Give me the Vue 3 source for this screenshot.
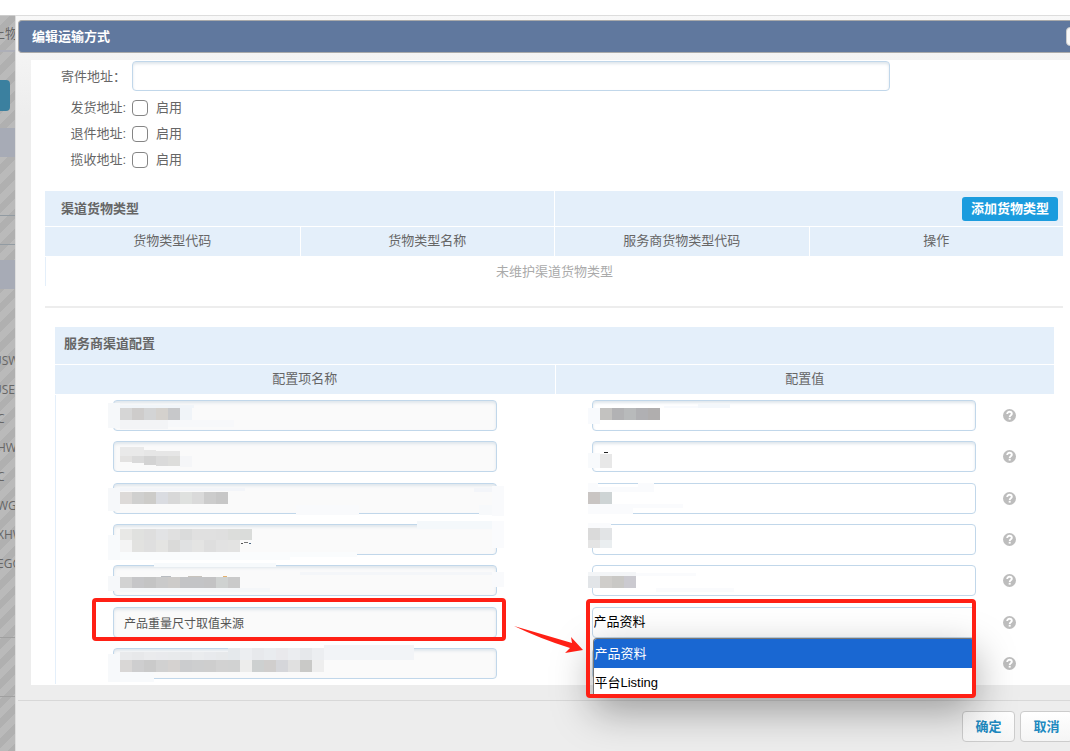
<script setup>
import { ref } from 'vue'

const switches = ['发货地址', '退件地址', '揽收地址']
const cargoColumns = ['货物类型代码', '货物类型名称', '服务商货物类型代码', '操作']
const backdropCodes = [
  { text: 'USW', far: true },
  { text: 'USE', far: true },
  { text: 'C' },
  { text: 'HW' },
  { text: 'C' },
  { text: 'WG' },
  { text: 'XHW' },
  { text: 'EGG' }
]
const source = ref('产品资料')
const sender = ref('')

// Masks are [x, y, width, height, colour] in the field's own coordinates.
const strip = (x, y, h, colours, w = 12) =>
  colours.split(' ').map((c, i) => [x + i * w, y, w, h, '#' + c])

const rows = [
  {
    name: [
      [-5, 3, 12, 25, '#f6f8fa'], [7, 5, 74, 3, '#f1f5f9'], [67, 8, 12, 12, '#f0f4f8'],
      [7, 20, 48, 9, '#f3f4f6'], [55, 20, 66, 7, '#f7f8fa'],
      ...strip(7, 8, 12, 'd6d6d6 cecccb d3d4d5 d4d1cd c7c8ca')
    ],
    value: [
      [-4, 8, 12, 16, '#f8fafd'], [72, 6, 34, 2, '#f8fafd'], [106, 4, 32, 4, '#f3f7fb'],
      ...strip(8, 8, 12, 'c3c2c0 b2b2b4 b8babb b0b0b3 b0aeae')
    ]
  },
  {
    name: [
      [7, 6, 24, 9, '#e9e9e9'], [31, 9, 12, 6, '#e6e6e6'], [43, 10, 24, 5, '#e6e6e6'],
      [67, 15, 12, 11, '#f5f6f8'], [7, 15, 12, 6, '#e3e2e1'], [19, 15, 12, 7, '#dadada'],
      [31, 15, 12, 9, '#d3d3d3'], [43, 15, 12, 10, '#dadada'], [55, 15, 12, 10, '#dddddb']
    ],
    value: [[-4, 12, 12, 15, '#f8fafc'], [8, 13, 12, 14, '#e8e8e8'], [12, 11, 4, 1, '#222222']]
  },
  {
    flat: true,
    name: [
      [-5, 5, 12, 23, '#f6f8fa'], [7, 5, 125, 3, '#f3f5f9'], [183, 22, 63, 10, '#f9fafc'],
      [361, 5, 18, 4, '#f3f5f9'], [366, 22, 13, 10, '#f7f9fb'], [379, 3, 12, 30, '#f9fafc'],
      ...strip(7, 9, 12, 'dddad8 d0d0cf cdccc9 dadce1 d8d8d8 dfe1df dadada cccccc c7c7c7')
    ],
    value: [
      [-4, 0, 10, 9, '#fafbfd'], [46, 0, 16, 9, '#fafbfd'], [6, 4, 56, 5, '#fafbfd'],
      [-4, 21, 45, 10, '#fafbfd'], [41, 21, 50, 4, '#fafbfd'],
      ...strip(-4, 9, 12, 'c9c5c3 ced4d5')
    ]
  },
  {
    flat: true,
    name: [
      [-5, 11, 12, 25, '#f8fafc'], [7, 28, 170, 8, '#fafcfd'], [177, 28, 67, 5, '#fafcfd'],
      [304, -3, 75, 8, '#f4f8fb'], [379, -3, 12, 27, '#fafbfd'],
      ...strip(7, 5, 11, 'e8e8e6 e0e1df dedede e2e3e5 e0e0e0 dadbdb e0e0e0 e0e0e0 dfdfdf dcdddb dadcda'),
      ...strip(7, 16, 12, 'f4f4f4 e2e2e0 dfdfdf e4e4e2 dadad9 e0e1e2 e4e4e3 dedede e2e2e2 e3e3e2'),
      [128, 19, 2, 1, '#555555'], [131, 18, 4, 1, '#777777'], [136, 19, 2, 1, '#4e6a88']
    ],
    value: [
      [-4, -1, 23, 5, '#fafbfd'],
      ...strip(-4, 4, 12, 'dadada e2e4e6'),
      ...strip(-4, 16, 8, 'e4e4e4 eaeef0')
    ]
  },
  {
    flat: true,
    name: [
      [41, -2, 122, 4, '#f7fafc'], [-5, 11, 12, 15, '#f6f8fa'], [187, 7, 192, 3, '#f4f6f9'],
      [379, 7, 12, 15, '#f9fafc'], [48, 11, 10, 1, '#b9bcc0'], [75, 11, 14, 1, '#c8c4be'],
      [110, 11, 4, 1, '#e6b26e'], [7, 23, 150, 4, '#f5f7f9'],
      ...strip(7, 12, 11, 'd2d2d2 c6c6c8 c4c4c4 cacaca cdcbc9 c3c4c6 c3c4c6 c3c3c4 cfd2d1 cacaca')
    ],
    value: [
      [-4, 7, 48, 4, '#f3f5f7'], [44, 8, 60, 3, '#fafbfd'], [64, 23, 78, 4, '#fafbfd'],
      ...strip(-4, 11, 12, 'e2e5e8 cfcdca c9c8c5 cbcad0')
    ]
  },
  { source: true },
  {
    name: [
      [-5, 6, 12, 28, '#f7f9fb'], [7, 24, 34, 10, '#f8fafc'],
      [211, -3, 90, 15, '#f2f4f7'],
      ...strip(7, 4, 8, 'e9eaec e7e8ea eaebed e9eaed e8eaec e7e9eb eaecee e8eaed e7e9eb'),
      ...strip(115, 0, 12, 'e5e9ec eceef1 e7e9ec e9ecef e9e9ec ebedf0 e6e8eb eceef1'),
      ...strip(7, 12, 12, 'd9d7d6 cececf cacaca d1d1d1 d5d2d0 cbccce cdcecf cecece d2d2d2 d1d2d2 ededec cdd0d0 d0cecd d5d6da e0e0e0 c9c9c7 eeeeee')
    ],
    value: []
  }
]
</script>

<template>
  <div class="stage">
    <aside class="backdrop" aria-hidden="true">
      <div class="crumb">上物</div>
      <div class="tab"></div>
      <div class="band"></div>
      <div class="cells"></div>
      <div class="band"></div>
      <ul class="codes">
        <li v-for="(code, i) in backdropCodes" :key="i" :class="{ far: code.far }">{{ code.text }}</li>
      </ul>
      <div class="tail"></div>
    </aside>

    <section class="dialog" role="dialog" aria-labelledby="dialog-title">
      <header class="titlebar">
        <h1 id="dialog-title">编辑运输方式</h1>
        <button class="close" type="button" aria-label="关闭"></button>
      </header>

      <main class="content">
        <div class="form">
          <div class="line sender">
            <label class="caption" for="sender">寄件地址：</label>
            <input id="sender" v-model="sender" class="box" type="text" />
          </div>
          <div v-for="(name, i) in switches" :key="name" class="line">
            <span class="caption">{{ name }}:</span>
            <input :id="'switch' + i" class="tick" type="checkbox" />
            <label :for="'switch' + i">启用</label>
          </div>
        </div>

        <table class="cargo">
          <thead>
            <tr class="heading">
              <th colspan="2">渠道货物类型</th>
              <th colspan="2" class="action"><button class="add" type="button">添加货物类型</button></th>
            </tr>
            <tr class="columns">
              <th v-for="c in cargoColumns" :key="c">{{ c }}</th>
            </tr>
          </thead>
          <tbody>
            <tr><td colspan="4" class="empty">未维护渠道货物类型</td></tr>
          </tbody>
        </table>

        <hr />

        <section class="config">
          <h2>服务商渠道配置</h2>
          <table class="settings">
            <thead>
              <tr class="columns"><th>配置项名称</th><th>配置值</th></tr>
            </thead>
            <tbody>
              <tr v-for="(row, i) in rows" :key="i">
                <td class="name-cell">
                  <div class="field">
                    <input
                      class="box readonly"
                      type="text"
                      readonly
                      aria-label="配置项名称"
                      :value="row.source ? '产品重量尺寸取值来源' : ''"
                    />
                    <svg v-if="row.name" class="mask" width="1" height="1">
                      <rect v-for="(m, k) in row.name" :key="k" :x="m[0]" :y="m[1]" :width="m[2]" :height="m[3]" :fill="m[4]" />
                    </svg>
                    <template v-if="row.source">
                      <span class="mark mark-name"></span>
                      <svg class="arrow" width="72" height="32" viewBox="0 0 72 32">
                        <path d="M1 3 L59 20 L58 14 L70 27 L52 30 L57 25 Q28 16 1 3Z" fill="#ff2015" />
                      </svg>
                    </template>
                  </div>
                </td>
                <td class="value-cell">
                  <div class="pair">
                    <div class="field">
                      <template v-if="row.source">
                        <select v-model="source" class="box flat" aria-label="产品重量尺寸取值来源">
                          <option>产品资料</option>
                          <option>平台Listing</option>
                        </select>
                        <ul class="menu" role="listbox">
                          <li class="chosen" role="option" aria-selected="true">产品资料</li>
                          <li role="option" aria-selected="false">平台Listing</li>
                        </ul>
                        <span class="mark mark-value"></span>
                      </template>
                      <template v-else>
                        <input class="box" :class="{ flat: row.flat }" type="text" aria-label="配置值" />
                        <svg class="mask" width="1" height="1">
                          <rect v-for="(m, k) in row.value" :key="k" :x="m[0]" :y="m[1]" :width="m[2]" :height="m[3]" :fill="m[4]" />
                        </svg>
                      </template>
                    </div>
                    <svg class="help" width="13" height="13" viewBox="0 0 13 13" role="img" aria-label="帮助">
                      <circle cx="6.5" cy="6.5" r="6.5" fill="#bdbdbd" />
                      <path d="M4.2 5.1C4.2 3.5 5.2 2.8 6.5 2.8S8.8 3.5 8.8 4.8C8.8 6.3 6.7 6.2 6.7 8" fill="none" stroke="#fff" stroke-width="1.9" />
                      <rect x="5.7" y="8.8" width="2" height="1.8" fill="#fff" />
                    </svg>
                  </div>
                </td>
              </tr>
            </tbody>
          </table>
        </section>
      </main>

      <footer class="actions">
        <button type="button">确定</button>
        <button type="button">取消</button>
      </footer>
    </section>
  </div>
</template>

<style>
body {
  margin: 0;
  background: #fff;
}
</style>

<style scoped>
* {
  box-sizing: border-box;
}
.stage {
  display: flex;
  min-height: 100vh;
  padding-top: 15px;
  overflow: hidden;
  color: #666;
  font: 13px/20px "Liberation Sans", "Noto Sans CJK SC", sans-serif;
}
button, input, select {
  font: inherit;
}
.backdrop {
  flex: none;
  width: 15px;
  overflow: hidden;
  white-space: nowrap;
  color: #666;
  background: repeating-linear-gradient(135deg, #bababa 0 7px, #b0b0b0 7px 14px);
  border-top: 1px solid #ccc;
}
.crumb {
  height: 36px;
  padding-top: 8px;
  text-indent: -8px;
  border-bottom: 2px solid #adafb8;
}
.tab {
  width: 10px;
  height: 31px;
  margin: 28px 0 17px;
  border-radius: 0 4px 4px 0;
  background: #3b809f;
}
.band {
  height: 29px;
  background: #a7abb6;
}
.cells {
  height: 30px;
  margin: 58px 0 15px;
  border: solid #929ba2;
  border-width: 1px 0;
}
.codes {
  margin: 57px 0 0;
  padding: 0;
  list-style: none;
  font: 12px/29px "Open Sans", "Noto Sans", sans-serif;
}
.codes li {
  height: 29px;
  text-indent: -3px;
}
.codes .far {
  text-indent: -7px;
}
.tail {
  height: 60px;
  margin-top: 59px;
  border: solid #a0a0a0;
  border-width: 1px 0;
}
.dialog {
  display: flex;
  flex: 1;
  flex-direction: column;
  min-width: 0;
  padding: 4px 0 0 2px;
  background: linear-gradient(#f8f8f8, #ededed 100px);
  border: solid #ddd;
  border-width: 1px 0 0 1px;
}
.titlebar {
  display: flex;
  align-items: center;
  justify-content: space-between;
  height: 33px;
  padding-left: 13px;
  color: #fff;
  background: #60789e;
  border: 1px solid #aaa;
  border-right: 0;
  border-radius: 4px 0 0 4px;
}
h1, h2 {
  margin: 0;
  font-size: 13px;
  font-weight: 700;
}
.close {
  width: 20px;
  height: 19px;
  margin-right: -16px;
  padding: 0;
  background: #f8f8f8;
  border: 1px solid #ccc;
  border-radius: 4px;
}
.content {
  margin: 7px 0 0 13px;
  padding: 1px 7px 1px 14px;
  background: #fff;
}
.form {
  padding-bottom: 18px;
}
.line {
  display: flex;
  align-items: center;
  height: 26px;
}
.sender {
  height: 34px;
  align-items: flex-start;
}
.caption {
  flex: none;
  width: 81px;
  margin-right: 6px;
  text-align: right;
}
.sender .caption {
  line-height: 32px;
}
.box {
  display: block;
  width: 100%;
  height: 30px;
  margin: 0;
  padding: 0 10px;
  color: #555;
  background: #fff;
  border: 1px solid #c1d7ea;
  border-radius: 4px;
  box-shadow: inset 0 2px 3px #dfe6ec;
  outline: 0;
}
.box.flat {
  box-shadow: none;
}
.sender .box {
  max-width: 758px;
}
.tick {
  width: 16px;
  height: 16px;
  margin: 0 8px 0 0;
  appearance: none;
  background: #fff;
  border: 1px solid #858585;
  border-radius: 4px;
}
table {
  width: 100%;
  table-layout: fixed;
  border-collapse: separate;
  border-spacing: 0;
}
th {
  padding: 0;
  background: #e4effa;
  border-bottom: 1px solid #fff;
}
th + th {
  border-left: 1px solid #fff;
}
.heading th {
  height: 36px;
  padding: 0 5px 0 16px;
  text-align: left;
}
.heading .action {
  text-align: right;
}
.add {
  display: inline-block;
  height: 24px;
  padding: 0 9px;
  color: #fff;
  font-weight: 700;
  line-height: 24px;
  vertical-align: middle;
  background: #1b9cde;
  border: 0;
  border-radius: 3px;
}
.columns th {
  height: 30px;
  padding-bottom: 2px;
  font-weight: 400;
}
.empty {
  height: 29px;
  padding: 0;
  color: #aaa;
  text-align: center;
  border-left: 1px solid #e4effa;
}
hr {
  height: 2px;
  margin: 20px 0 19px;
  border: 0;
  background: #ededed;
}
.config {
  margin: 0 9px 0 10px;
}
h2 {
  height: 38px;
  padding: 0 9px;
  line-height: 34px;
  background: #e4effa;
  border-bottom: 1px solid #fff;
}
.settings {
  height: 319px;
}
.settings td {
  padding: 0;
  vertical-align: middle;
}
.name-cell {
  border-left: 1px solid #e4effa;
}
.name-cell .field {
  width: 77%;
  margin-left: 57px;
}
.pair {
  display: flex;
  align-items: center;
  padding: 0 38px 0 37px;
}
.pair .field {
  flex: 1;
  margin-right: 27px;
}
.field {
  position: relative;
}
.field .box {
  height: 31px;
}
.readonly {
  background: #fafafa;
  font-size: 12px;
}
select.box {
  padding: 0 1px;
  color: #000;
  appearance: none;
}
.mask {
  position: absolute;
  top: 0;
  left: 0;
  overflow: visible;
  pointer-events: none;
  shape-rendering: crispEdges;
}
.mark {
  position: absolute;
  z-index: 3;
  border: 4px solid #ff2015;
  border-radius: 4px;
  pointer-events: none;
}
.mark-name {
  inset: -9px -9px -3px -21px;
}
.mark-value {
  inset: -8px 0 -60px -6px;
}
.arrow {
  position: absolute;
  z-index: 3;
  top: 16px;
  left: calc(100% + 16px);
}
.menu {
  position: absolute;
  z-index: 2;
  top: 31px;
  right: 1px;
  left: 1px;
  margin: 0;
  padding: 0;
  color: #000;
  line-height: 30px;
  list-style: none;
  background: #fff;
  border: 1px solid #777;
  border-bottom: 0;
  border-radius: 4px 4px 0 0;
  box-shadow: 0 14px 40px rgba(0, 0, 0, 0.35);
}
.menu li {
  height: 29px;
  padding-left: 1px;
}
.menu .chosen {
  color: #fff;
  background: #1967d2;
  border-radius: 3px 3px 0 0;
}
.help {
  flex: none;
}
.actions {
  display: flex;
  flex: 1;
  justify-content: flex-end;
  gap: 5px;
  margin: 15px -3px 0 0;
  padding: 10px 0 9px;
  border-top: 1px solid #d8d8d8;
}
.actions button {
  width: 53px;
  height: 31px;
  padding: 0;
  color: #2089c0;
  font-weight: 700;
  background: linear-gradient(#fff, #f5f5f5);
  border: 1px solid #ccc;
  border-radius: 4px;
}
</style>
